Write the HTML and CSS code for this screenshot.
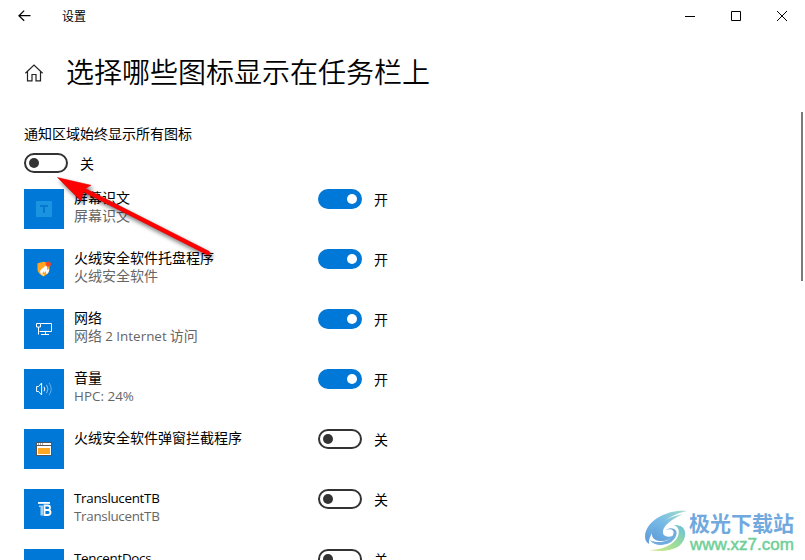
FILE: index.html
```html
<!DOCTYPE html>
<html lang="zh-CN">
<head>
    <meta charset="UTF-8">
    <meta name="viewport" content="width=device-width, initial-scale=1.0">
    <title>设置</title>
    <link rel="stylesheet" href="styles.css">
</head>
<body>
    <div class="titlebar">
        <svg class="back" width="14" height="12" viewBox="0 0 14 12"><path d="M6.200 .6 .9 5.700l5.300 5.100M1 5.700h11.500"/></svg>
        <span class="app-name">设置</span>
        <div class="window-buttons">
            <svg width="12" height="12" viewBox="0 0 12 12"><path d="M1 6.500h10"/></svg>
            <svg width="12" height="12" viewBox="0 0 12 12"><path d="M1.500 1.500h9v9h-9z"/></svg>
            <svg width="12" height="12" viewBox="0 0 12 12"><path d="m1 1 10 10M11 1 1 11"/></svg>
        </div>
    </div>

    <div class="page-header">
        <svg class="home" width="20" height="20" viewBox="0 0 20 20"><path d="M1.400 10.200 10 2l8.600 8.200M3.500 8.500v9.300h4.500v-6.300h4v6.300h4.500V8.500"/></svg>
        <h1>选择哪些图标显示在任务栏上</h1>
    </div>

    <div class="content">
        <div class="show-all">通知区域始终显示所有图标</div>
        <div class="switch master">
            <span class="toggle"></span>
            <span class="state">关</span>
        </div>

        <div class="item">
            <div class="icon">
                <svg width="16" height="16" viewBox="0 0 16 16"><rect width="16" height="16" rx="1" fill="#1a94e0"/><path d="M4 4h8v2H9v6H7V6H4z" fill="#0878cf"/></svg>
            </div>
            <div class="text">
                <div class="name">屏幕识文</div>
                <div class="desc">屏幕识文</div>
            </div>
            <div class="switch">
                <span class="toggle on"></span>
                <span class="state">开</span>
            </div>
        </div>

        <div class="item">
            <div class="icon">
                <svg width="16" height="16" viewBox="0 0 16 16"><path d="M1.500 2.300 7.500.7l6 1.600v6c0 3-2.300 5.500-6 7.200-3.700-1.700-6-4.200-6-7.200z" fill="#ffa51f"/><path d="M10.500 4 5 8.500q-2 2.500.5 5l2 1.500L8 12l2-2 .3 3.500q3-2 2.700-5.500l-2 1V6z" fill="#fff"/><path d="M8 10 6.500 12v2L8 13z" fill="#ffa51f"/><circle cx="12.300" cy="3" r="2.600" fill="#f04a23"/></svg>
            </div>
            <div class="text">
                <div class="name">火绒安全软件托盘程序</div>
                <div class="desc">火绒安全软件</div>
            </div>
            <div class="switch">
                <span class="toggle on"></span>
                <span class="state">开</span>
            </div>
        </div>

        <div class="item">
            <div class="icon">
                <svg class="line" width="16" height="16" viewBox="0 0 16 16"><path d="M5 2.500h10.500v8H3.500M.5 2.500H4.500v3.500H.5zM2.500 6v7.500M9.500 10.500v3M5 13.500h8"/></svg>
            </div>
            <div class="text">
                <div class="name">网络</div>
                <div class="desc">网络 <span class="latin wide">2 Internet</span> 访问</div>
            </div>
            <div class="switch">
                <span class="toggle on"></span>
                <span class="state">开</span>
            </div>
        </div>

        <div class="item">
            <div class="icon">
                <svg class="line" width="16" height="16" viewBox="0 0 16 16"><path d="M.6 5.500h2l3-3.500v12l-3-3.500h-2z"/><path d="M8 5.800q1.600 2.200 0 4.400"/><path d="M10.500 3.800q3 4.200 0 8.400" opacity=".55"/><path d="M13 1.800q4.400 6.200 0 12.400" opacity=".4"/></svg>
            </div>
            <div class="text">
                <div class="name">音量</div>
                <div class="desc latin wide">HPC: 24%</div>
            </div>
            <div class="switch">
                <span class="toggle on"></span>
                <span class="state">开</span>
            </div>
        </div>

        <div class="item">
            <div class="icon">
                <svg width="16" height="16" viewBox="0 0 16 16"><path d="M0 1h16v14H0z" fill="#555"/><path d="M1 2h14v2H1zM1 5h14v9H1z" fill="#fff"/><path d="M2 7h12v6H2z" fill="#ffa623"/><path d="M2 2.500h1v1H2zM4 2.500h1v1H4zM6 2.500h1v1H6z" fill="#555"/></svg>
            </div>
            <div class="text">
                <div class="name">火绒安全软件弹窗拦截程序</div>
            </div>
            <div class="switch">
                <span class="toggle"></span>
                <span class="state">关</span>
            </div>
        </div>

        <div class="item">
            <div class="icon">
                <svg width="16" height="16" viewBox="0 0 16 16"><path d="M2 1h12v2H2zM3 4.500h4V6H3zM4.500 6H7v8.500H4.500z" fill="#a9d4f5"/><path d="M2 1h12v1.500H2z" fill="#fff"/><path d="M8.500 4.500h3q2.500 0 2.500 2.200 0 1.700-1.500 2.300 2 .5 2 2.500 0 2.500-3 2.500h-3zM8.500 4.500v9.500M8.500 9h4" stroke="#fff" stroke-width="1.900"/></svg>
            </div>
            <div class="text">
                <div class="name latin">TranslucentTB</div>
                <div class="desc latin">TranslucentTB</div>
            </div>
            <div class="switch">
                <span class="toggle"></span>
                <span class="state">关</span>
            </div>
        </div>

        <div class="item">
            <div class="icon"></div>
            <div class="text">
                <div class="name latin">TencentDocs</div>
            </div>
            <div class="switch">
                <span class="toggle"></span>
                <span class="state">关</span>
            </div>
        </div>
    </div>

    <div class="scrollbar"></div>

    <svg class="arrow" width="180" height="100" viewBox="0 0 180 100">
        <path d="M7.500 7.500 41 15.300 35.500 18.600 159 81.300Q161 83 160 84.300 159 85.500 157 84.700L33.500 22 31 31z"/>
    </svg>

    <div class="watermark">
        <svg width="44" height="44" viewBox="0 0 44 44">
            <defs>
                <linearGradient id="blue" x1="0" y1="1" x2="1" y2="0">
                    <stop offset="0" stop-color="#5f9bd8"/>
                    <stop offset=".55" stop-color="#78bce6"/>
                    <stop offset="1" stop-color="#a5dfc9"/>
                </linearGradient>
                <linearGradient id="green" x1="0" y1="1" x2="1" y2="0">
                    <stop offset="0" stop-color="#d9e98c"/>
                    <stop offset=".5" stop-color="#9bdc9a"/>
                    <stop offset="1" stop-color="#69bfe0"/>
                </linearGradient>
            </defs>
            <path d="M42 3C24 1 1 12 0 28c0 4 1 6 4 8C3 24 20 8 42 3z" fill="url(#blue)"/>
            <path d="M38 6C22 9 6 18 7 27c1 8 16 8 23 0-6 3-13 2-12-4 1-6 9-12 20-17z" fill="url(#blue)"/>
            <path d="M21 22c6-2 9 1 7 5C25 34 12 36 5 32c5 8 22 6 26-4 3-7-5-10-10-6z" fill="#70acdf"/>
            <path d="M29 17c14-1 14 14 5 21-7 5-19 6-30 4 14 0 26-6 29-14 2-6 0-9-4-11z" fill="url(#green)"/>
        </svg>
        <div class="watermark-text">
            <div class="site-name">极光下载站</div>
            <div class="site-url">www.xz7.com</div>
        </div>
    </div>
</body>
</html>
```

FILE: styles.css
```css
* {
    margin: 0;
    padding: 0;
    box-sizing: border-box;
}

body {
    height: 560px;
    overflow: hidden;
    position: relative;
    background: #fff;
    color: #000;
    font-family: 'Noto Sans CJK SC', sans-serif;
    font-size: 14px;
    line-height: 18px;
}

svg {
    display: block;
    fill: none;
}

.titlebar {
    height: 32px;
    padding: 0 16px 0 18px;
    display: flex;
    align-items: center;
}

.back {
    stroke: #000;
    stroke-width: 1.2;
}

.app-name {
    margin-left: 30px;
    font-size: 12px;
}

.window-buttons {
    margin-left: auto;
    display: flex;
    gap: 34px;
    padding-right: 1px;
}

.window-buttons svg {
    stroke: #000;
}

.page-header {
    height: 82px;
    padding-left: 24px;
    display: flex;
    align-items: center;
    gap: 22px;
}

.home {
    stroke: #222;
    stroke-width: 1.2;
}

h1 {
    padding-bottom: 4px;
    font-size: 28px;
    font-weight: 350;
    line-height: 40px;
}

.content {
    padding: 10px 24px 0;
}

.show-all {
    height: 29px;
}

.switch {
    height: 20px;
    display: flex;
    align-items: center;
    gap: 12px;
}

.master {
    margin-bottom: 16px;
}

.toggle {
    width: 44px;
    height: 20px;
    padding: 0 3px;
    border: 2px solid #333;
    border-radius: 10px;
    display: flex;
    align-items: center;
}

.toggle::before {
    content: "";
    width: 10px;
    height: 10px;
    border-radius: 50%;
    background: #333;
}

.toggle.on {
    border-color: #0078d7;
    background: #0078d7;
    justify-content: flex-end;
}

.toggle.on::before {
    background: #fff;
}

.item {
    height: 40px;
    margin-bottom: 20px;
    display: flex;
}

.icon {
    width: 40px;
    height: 40px;
    background: #0078d7;
    display: flex;
    align-items: center;
    justify-content: center;
}

.icon .line {
    stroke: #fff;
}

.text {
    width: 244px;
    margin: -1px 0 0 10px;
    white-space: nowrap;
}

.desc {
    color: #666;
}

.latin {
    font-family: 'Open Sans', 'Noto Sans', sans-serif;
    letter-spacing: -.3px;
    font-size: 13.4px;
}

.latin.wide {
    letter-spacing: .02px;
}

div.latin {
    padding-top: 1px;
    margin-bottom: -1px;
}

.scrollbar {
    position: absolute;
    right: 2px;
    top: 112px;
    width: 2px;
    height: 169px;
    background: #7a7a7a;
}

.arrow {
    position: absolute;
    left: 50px;
    top: 170px;
    fill: #fe0000;
    stroke: #d80000;
    stroke-width: .5;
    filter: drop-shadow(2px 3px 2px rgba(0, 0, 0, .55));
}

.watermark {
    position: absolute;
    left: 645px;
    top: 508px;
    display: flex;
}

.watermark-text {
    white-space: nowrap;
}

.site-name {
    color: #71a9de;
    font-size: 21px;
    font-weight: bold;
    line-height: 28px;
}

.site-url {
    padding: 1px 0 0 1px;
    color: #6fcf97;
    -webkit-text-stroke: .5px #6fcf97;
    font-family: 'Liberation Sans', Arial, sans-serif;
    font-size: 17px;
    line-height: 16px;
}
```
